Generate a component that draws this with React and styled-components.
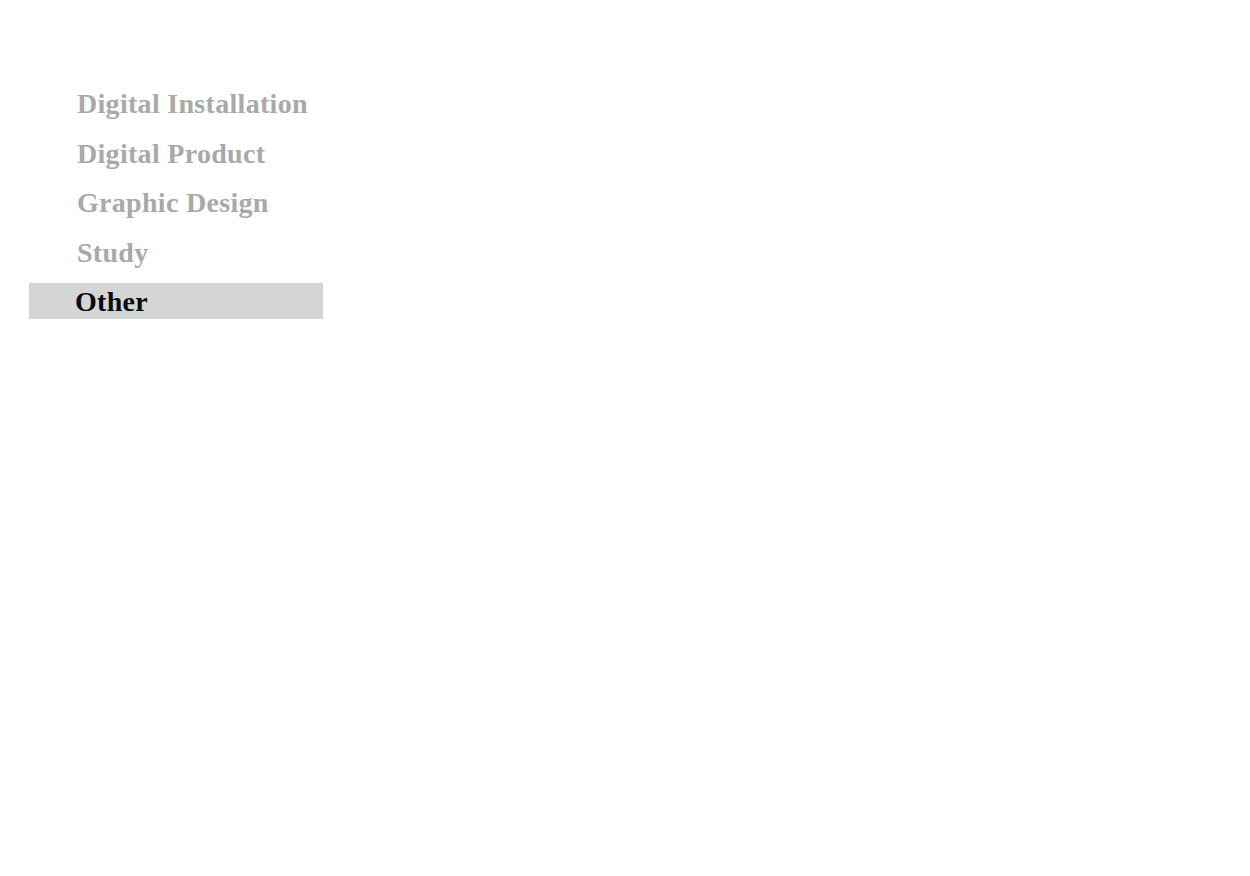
import React from 'react'
import styled, { createGlobalStyle } from 'styled-components'

const GlobalStyle = createGlobalStyle`
  html, body {
    margin: 0;
    padding: 0;
    background: #ffffff;
  }
  body {
    font-family: "Liberation Serif", "DejaVu Serif", serif;
  }
`

const categories = [
  'Digital Installation',
  'Digital Product',
  'Graphic Design',
  'Study',
  'Other',
]

const App = () => {
  const active = 'Other'

  return (
    <Page>
      <GlobalStyle />
      <Menu>
        {categories.map((name) => (
          <Item key={name} active={name === active ? 1 : 0}>
            {name}
          </Item>
        ))}
      </Menu>
    </Page>
  )
}

export default App

const Page = styled.div`
  width: 1250px;
  height: 876px;
  padding: 85px 0 0 29px;
  box-sizing: border-box;
`

const Menu = styled.ul`
  list-style: none;
  margin: 0;
  padding: 0;
  width: 294px;
  display: flex;
  flex-direction: column;
  gap: 13.5px;
`

const Item = styled.li`
  height: 36px;
  line-height: 37px;
  padding-left: ${(p) => (p.active ? '46px' : '48px')};
  font-size: 28px;
  font-weight: 700;
  letter-spacing: 0.3px;
  color: ${(p) => (p.active ? '#0a0a0a' : '#a9a9a9')};
  background: ${(p) => (p.active ? '#d4d5d5' : 'transparent')};
  cursor: pointer;
  white-space: nowrap;
`
